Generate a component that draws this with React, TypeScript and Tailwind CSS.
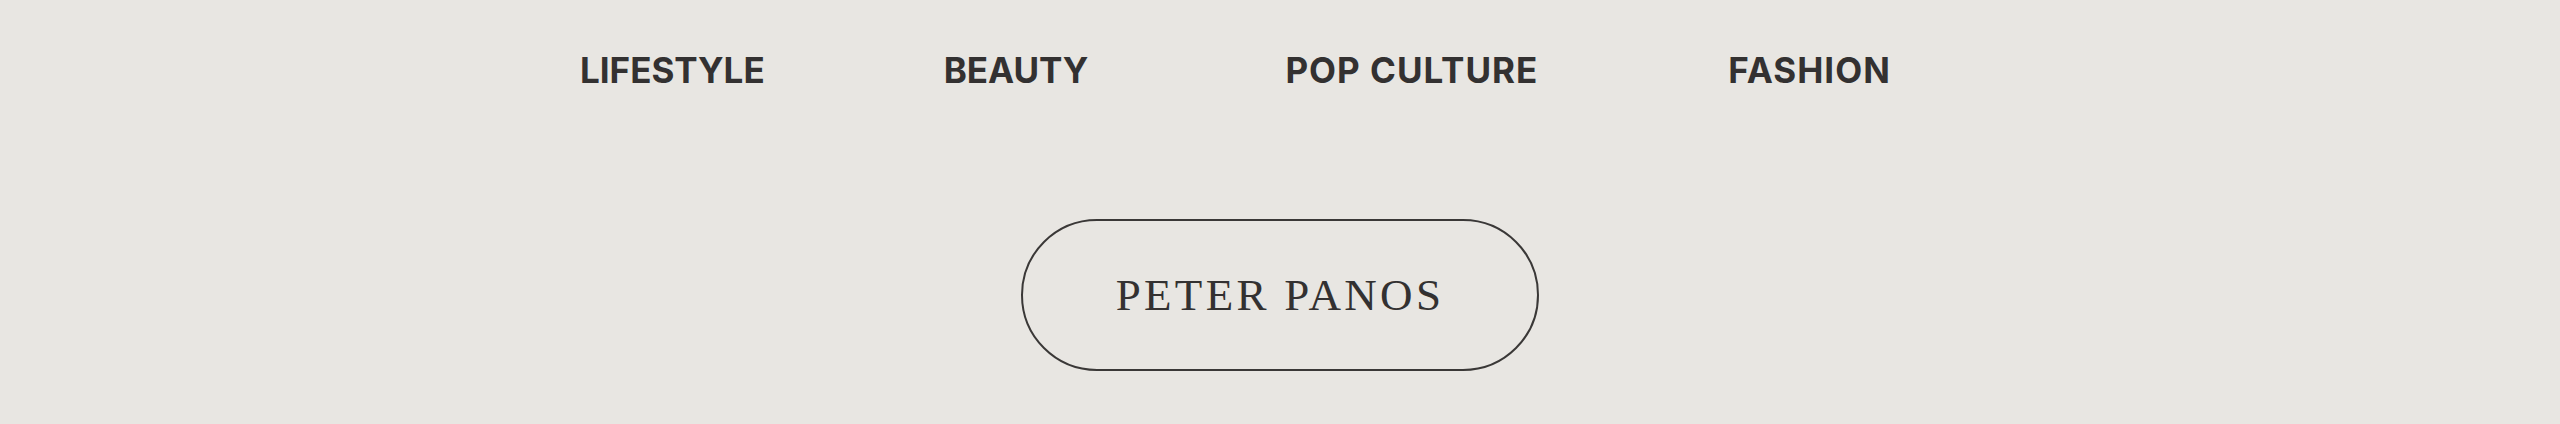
export default function App() {
  const links = [
    { label: "LIFESTYLE", cls: "ml-[580px]" },
    { label: "BEAUTY", cls: "ml-[179px]" },
    { label: "POP CULTURE", cls: "ml-[197px] tracking-[1px]" },
    { label: "FASHION", cls: "ml-[190px] tracking-[1px]" },
  ];
  return (
    <div className="h-[424px] w-full bg-[#e8e6e2] text-[#333131]">
      {/* Top nav */}
      <nav className="flex pt-[50px] font-['Inter',sans-serif] text-[35px] leading-[40px] font-bold">
        {links.map((l) => (
          <a key={l.label} href="#" className={l.cls}>
            {l.label}
          </a>
        ))}
      </nav>

      {/* Name pill */}
      <div className="mt-[129px] flex justify-center">
        <div className="flex h-[152px] w-[518px] items-center justify-center rounded-full border-2 border-[#3a3837]">
          <span className="font-['Liberation_Serif',serif] text-[45px] leading-none tracking-[3.3px]">
            PETER PANOS
          </span>
        </div>
      </div>
    </div>
  );
}
